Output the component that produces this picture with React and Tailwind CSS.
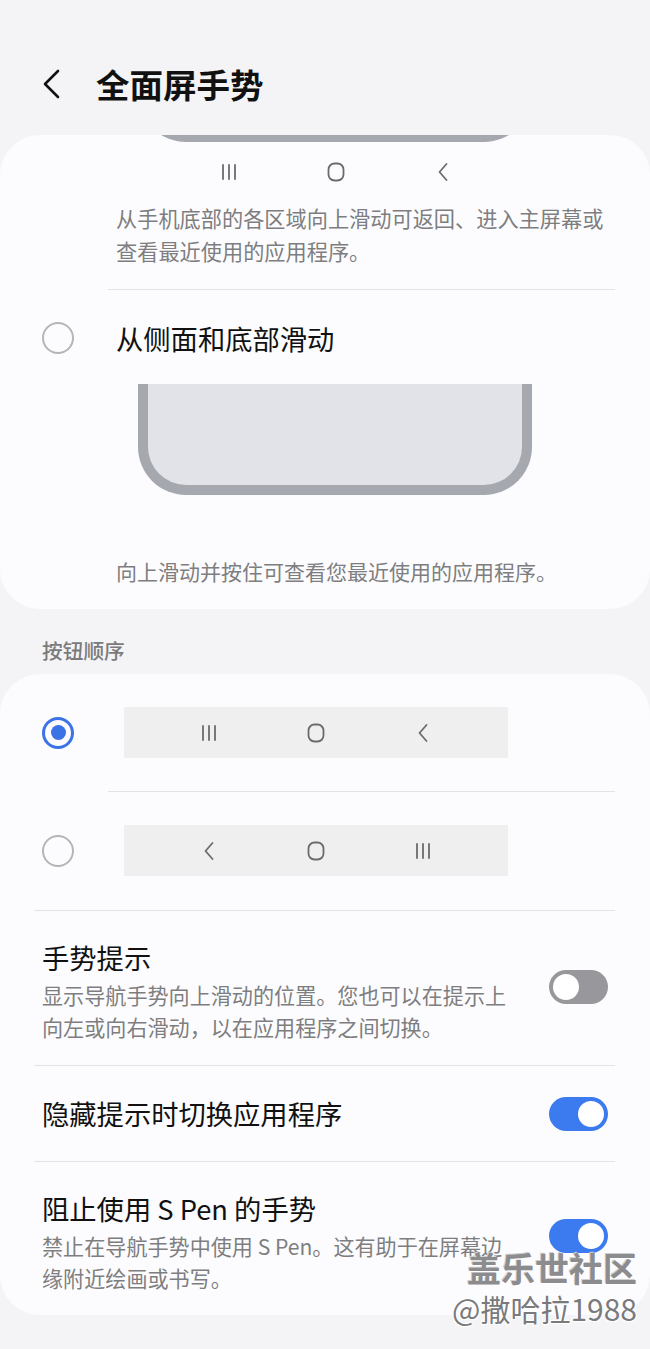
import React from 'react';

const font = { fontFamily: '"Noto Sans CJK SC", "Noto Sans", sans-serif' };

const Recents = () => (
  <svg width="20" height="18" viewBox="0 0 20 18" fill="none" stroke="#6b6b6e" strokeWidth="1.8" strokeLinecap="round">
    <path d="M4 2v14M10 2v14M16 2v14" />
  </svg>
);

const Home = () => (
  <svg width="20" height="20" viewBox="0 0 20 20" fill="none" stroke="#6b6b6e" strokeWidth="1.8">
    <rect x="2.5" y="1.5" width="15" height="17" rx="6" />
  </svg>
);

const Back = () => (
  <svg width="14" height="20" viewBox="0 0 14 20" fill="none" stroke="#6b6b6e" strokeWidth="1.8" strokeLinecap="round" strokeLinejoin="round">
    <path d="M10.5 2L3.5 10l7 8" />
  </svg>
);

const NavIcons = ({ order }) => (
  <>
    {order.map((k, i) => (
      <div key={i} className="flex w-[107px] items-center justify-center">
        {k === 'r' ? <Recents /> : k === 'h' ? <Home /> : <Back />}
      </div>
    ))}
  </>
);

const Radio = ({ checked }) =>
  checked ? (
    <div className="flex h-[32px] w-[32px] shrink-0 items-center justify-center rounded-full border-[3.5px] border-[#3b73e6]">
      <div className="h-[15px] w-[15px] rounded-full bg-[#3b73e6]" />
    </div>
  ) : (
    <div className="h-[32px] w-[32px] shrink-0 rounded-full border-[2.5px] border-[#b5b5b7]" />
  );

const Toggle = ({ on }) =>
  on ? (
    <div className="flex h-[34px] w-[59px] shrink-0 items-center justify-end rounded-full bg-[#3c7af0] pr-[4px]">
      <div className="h-[26px] w-[26px] rounded-full bg-white" />
    </div>
  ) : (
    <div className="flex h-[34px] w-[59px] shrink-0 items-center justify-start rounded-full bg-[#98989c] pl-[4px]">
      <div className="h-[26px] w-[26px] rounded-full bg-white" />
    </div>
  );

const Divider = ({ wide }) => (
  <div className={wide ? 'ml-[34px] mr-[35px] h-px bg-[#e4e4e7]' : 'ml-[108px] mr-[35px] h-px bg-[#e4e4e7]'} />
);

export default function App() {
  return (
    <div className="relative min-h-[1349px] w-[650px] overflow-hidden bg-[#f4f4f6] pb-[36px]" style={font}>
      {/* header */}
      <div className="mt-[60px] flex h-[48px] items-center">
        <svg className="ml-[41px]" width="22" height="30" viewBox="0 0 22 30" fill="none" stroke="#111" strokeWidth="2.6" strokeLinecap="round" strokeLinejoin="round">
          <path d="M17 2L4 15l13 13" />
        </svg>
        <h1 className="ml-[33px] text-[33.5px] font-bold leading-none text-[#111]">全面屏手势</h1>
      </div>

      {/* card 1 */}
      <div className="mt-[27px] overflow-hidden rounded-[40px] bg-[#fcfcfe] pb-[21px]">
        <div className="ml-[138px] -mt-[53px] h-[60px] w-[394px] rounded-b-[48px] border-x-[10px] border-b-[10px] border-[#a6a8af] bg-[#e2e4e9]" />
        <div className="ml-[175px] mt-[15px] flex h-[30px]">
          <NavIcons order={['r', 'h', 'b']} />
        </div>
        <p className="mt-[14px] pl-[116px] pr-[20px] text-[21.2px] leading-[33px] text-[#7e7e80]">
          从手机底部的各区域向上滑动可返回、进入主屏幕或
          <br />
          查看最近使用的应用程序。
        </p>
        <div className="mt-[22px]">
          <Divider />
        </div>
        <div className="mt-[23px] flex h-[50px] items-center pl-[42px]">
          <Radio />
          <span className="ml-[42px] text-[27.3px] text-[#111]">从侧面和底部滑动</span>
        </div>
        <div className="ml-[138px] mt-[21px] h-[111px] w-[394px] rounded-b-[48px] border-x-[10px] border-b-[10px] border-[#a6a8af] bg-[#e1e3e8]" />
        <p className="mt-[60px] pl-[116px] text-[21px] leading-[33px] text-[#7e7e80]">向上滑动并按住可查看您最近使用的应用程序。</p>
      </div>

      {/* section header */}
      <div className="mt-[27px] pl-[42px] text-[20.7px] font-medium leading-[28px] text-[#7b7b7d]">按钮顺序</div>

      {/* card 2 */}
      <div className="mt-[10px] rounded-[40px] bg-[#fcfcfe] pb-[21px]">
        <div className="flex items-center pl-[42px] pt-[33px]">
          <Radio checked />
          <div className="ml-[50px] flex h-[51px] w-[384px] items-center justify-center bg-[#efeff0]">
            <NavIcons order={['r', 'h', 'b']} />
          </div>
        </div>
        <div className="mt-[33px]">
          <Divider />
        </div>
        <div className="mt-[33px] flex items-center pl-[42px]">
          <Radio />
          <div className="ml-[50px] flex h-[51px] w-[384px] items-center justify-center bg-[#efeff0]">
            <NavIcons order={['b', 'h', 'r']} />
          </div>
        </div>
        <div className="mt-[34px]">
          <Divider wide />
        </div>

        <div className="mt-[28px] flex items-center pl-[42px] pr-[42px]">
          <div className="flex-1">
            <div className="text-[27.3px] leading-[36px] text-[#111]">手势提示</div>
            <p className="mt-[4px] whitespace-nowrap text-[21.1px] leading-[32px] text-[#7e7e80]">
              显示导航手势向上滑动的位置。您也可以在提示上
              <br />
              向左或向右滑动，以在应用程序之间切换。
            </p>
          </div>
          <div className="-mt-[8px]">
            <Toggle />
          </div>
        </div>
        <div className="mt-[22px]">
          <Divider wide />
        </div>

        <div className="flex h-[95px] items-center justify-between pl-[42px] pr-[42px]">
          <span className="text-[27.3px] text-[#111]">隐藏提示时切换应用程序</span>
          <Toggle on />
        </div>
        <Divider wide />

        <div className="mt-[28px] flex items-center pl-[42px] pr-[42px]">
          <div className="flex-1">
            <div className="text-[27.3px] leading-[36px] text-[#111]">阻止使用 S Pen 的手势</div>
            <p className="mt-[4px] whitespace-nowrap text-[21.1px] leading-[32px] text-[#7e7e80]">
              禁止在导航手势中使用 S Pen。这有助于在屏幕边
              <br />
              缘附近绘画或书写。
            </p>
          </div>
          <div className="-mt-[12px]">
            <Toggle on />
          </div>
        </div>
      </div>

      {/* watermark */}
      <div className="pointer-events-none absolute right-[13px] top-[1247px] flex flex-col items-end">
        <span className="text-[34px] font-bold leading-[42px] text-[#8c8c8e] [text-shadow:1px_1px_0_#ffffff,-1px_-1px_0_#cfcfd2]">盖乐世社区</span>
        <span className="text-[30px] leading-[38px] text-[#7a7a7c] [text-shadow:1px_1px_0_#ffffff,-1px_-1px_0_#ffffff,1px_-1px_0_#ffffff,-1px_1px_0_#ffffff]">@撒哈拉1988</span>
      </div>
    </div>
  );
}
